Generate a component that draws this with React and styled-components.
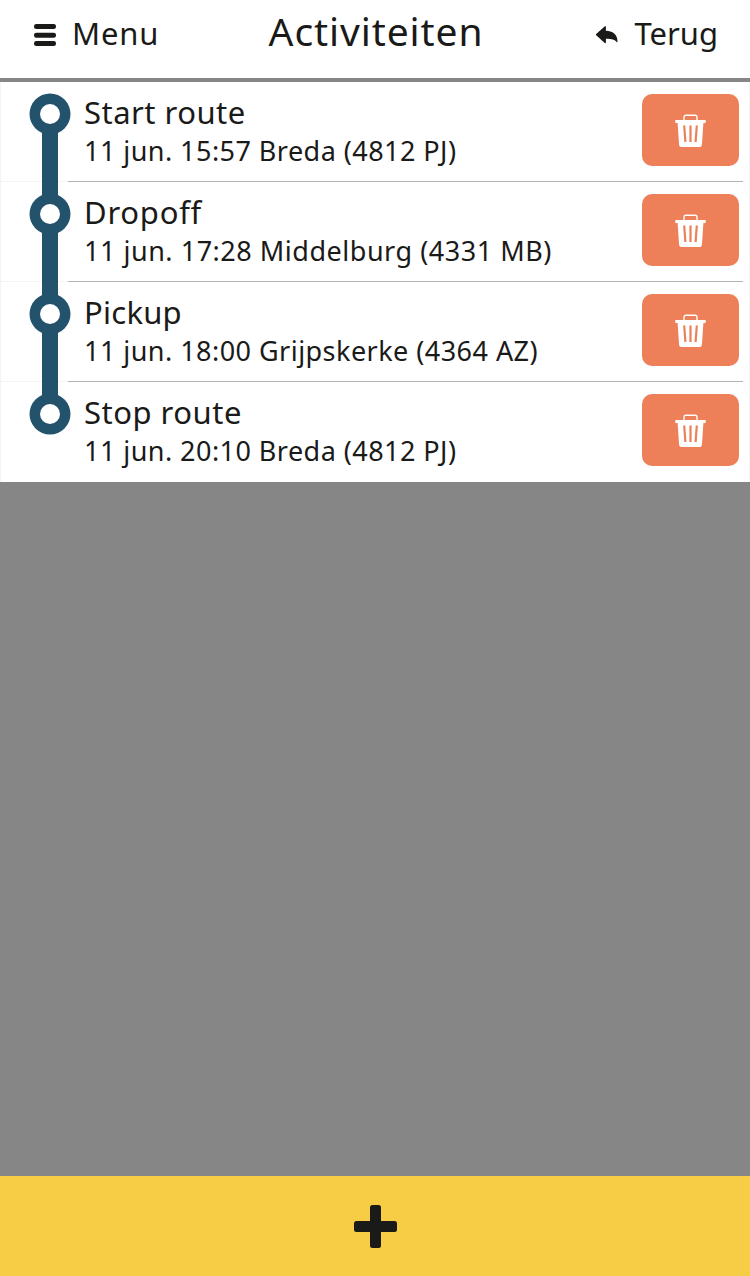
import React from "react";
import styled, { createGlobalStyle } from "styled-components";

const GlobalStyle = createGlobalStyle`
  * { box-sizing: border-box; }
  body { margin: 0; background: #868686; }
  button { border: 0; padding: 0; margin: 0; background: none; font: inherit; color: inherit; }
  svg { display: block; }
`;

const Screen = styled.div`
  display: flex;
  flex-direction: column;
  width: 750px;
  height: 1276px;
  background: #868686;
  color: #1a1a18;
  font-family: "Noto Sans", "Open Sans", sans-serif;
`;

const Header = styled.header`
  display: grid;
  grid-template-columns: 1fr auto 1fr;
  height: 78px;
  padding: 0 32px 0 34px;
  margin-bottom: 4px;
  background: #fff;
`;

const HeaderButton = styled.button`
  display: flex;
  justify-self: ${(p) => p.$side};
  gap: 16px;
  height: 70px;
  align-items: center;
  font-size: 31px;
  line-height: 42px;
  letter-spacing: ${(p) => p.$track}px;
`;

const HeaderLabel = styled.span`
  padding-bottom: 5px;
`;

const Title = styled.h1`
  margin: 4px 0 0;
  font-size: 39px;
  font-weight: 400;
  line-height: 54px;
  letter-spacing: 0.9px;
`;

const List = styled.ul`
  margin: 0;
  padding: 0;
  list-style: none;
  background: #fff;
`;

const Row = styled.li`
  display: flex;
  height: 100px;
  border: solid #f4f4f4;
  border-width: 0 1px;
`;

const Track = styled.div`
  width: 67px;
  padding-left: 28px;
  border-bottom: 1px solid ${(p) => (p.$last ? "transparent" : "#f4f4f4")};
`;

const Details = styled.div`
  display: flex;
  flex: 1;
  justify-content: space-between;
  margin-right: 6px;
  padding: 0 4px 0 16px;
  border-bottom: 1px solid ${(p) => (p.$last ? "transparent" : "#b4b4b4")};
`;

const Texts = styled.div`
  padding-top: 9px;
  white-space: nowrap;
`;

const Name = styled.div`
  font-size: 31px;
  line-height: 42px;
  letter-spacing: ${(p) => p.$track}px;
`;

const Info = styled.div`
  margin-top: 2px;
  font-size: 27px;
  line-height: 32px;
  letter-spacing: ${(p) => p.$track}px;
`;

const DeleteButton = styled.button`
  display: flex;
  justify-content: center;
  width: 97px;
  height: 72px;
  margin-top: 12px;
  padding-top: 20px;
  border-radius: 10px;
  background: #ed7f59;
`;

const AddBar = styled.button`
  display: flex;
  align-items: center;
  justify-content: center;
  height: 100px;
  margin-top: auto;
  background: #f7cd45;
`;

const MenuIcon = () => (
  <svg width="22" height="22" viewBox="0 0 22 22" fill="currentColor">
    <rect x="0" y="0" width="22" height="5" rx="2.3" />
    <rect x="0" y="8.8" width="22" height="5" rx="2.3" />
    <rect x="0" y="17" width="22" height="5" rx="2.3" />
  </svg>
);

const BackIcon = () => (
  <svg width="22" height="18" viewBox="0 0 22 18" fill="currentColor">
    <path d="M.2 8.1 8.600.4q1-.8 1.300.5V4.800C16.500 5 21.500 8.400 21.500 15.600q-.3 1.300-1.100.2C18.200 13.200 15 12.600 9.900 12.800v3.600q-.2 1.300-1.200.5L.2 9.300q-.5-.6 0-1.200Z" />
  </svg>
);

const Node = ({ first, last }) => (
  <svg width="42" height="100" viewBox="0 0 42 100">
    {!first && <rect x="13" y="0" width="16" height="32" fill="#23526d" />}
    {!last && <rect x="13" y="32" width="16" height="68" fill="#23526d" />}
    <circle cx="21" cy="32" r="20.5" fill="#23526d" />
    <circle cx="21" cy="32" r="10" fill="#fff" />
  </svg>
);

const TrashIcon = () => (
  <svg width="31" height="34" viewBox="0 0 31 34">
    <path d="M9 7V3.200Q9 1.200 11 1.200h9Q22 1.200 22 3.200V7" fill="none" stroke="#fff" strokeWidth="1.4" />
    <path d="M.3 6h30.400v3h-2.300L26.900 31q-.2 2-2.200 2H6.300q-2 0-2.200-2L2.600 9H.3Z" fill="#fff" />
    <path d="m9.200 11.500 1.200 16.500M15.500 11.500V28M21.800 11.500 20.600 28" fill="none" stroke="#ed7f59" strokeWidth="2.2" />
  </svg>
);

const PlusIcon = () => (
  <svg width="43" height="43" viewBox="0 0 43 43" fill="currentColor">
    <rect x="16" y="0" width="11" height="43" rx="2.5" />
    <rect x="0" y="16" width="43" height="11" rx="2.5" />
  </svg>
);

const activities = [
  { name: "Start route", info: "11 jun. 15:57 Breda (4812 PJ)", nameTrack: 0.48, infoTrack: 0.45 },
  { name: "Dropoff", info: "11 jun. 17:28 Middelburg (4331 MB)", nameTrack: 0.75, infoTrack: 0.52 },
  { name: "Pickup", info: "11 jun. 18:00 Grijpskerke (4364 AZ)", nameTrack: 0.25, infoTrack: 0.46 },
  { name: "Stop route", info: "11 jun. 20:10 Breda (4812 PJ)", nameTrack: 0.5, infoTrack: 0.45 },
];

export default function App() {
  return (
    <Screen>
      <GlobalStyle />
      <Header>
        <HeaderButton $side="start" $track={0.8}>
          <MenuIcon />
          <HeaderLabel>Menu</HeaderLabel>
        </HeaderButton>
        <Title>Activiteiten</Title>
        <HeaderButton $side="end" $track={0}>
          <BackIcon />
          <HeaderLabel>Terug</HeaderLabel>
        </HeaderButton>
      </Header>
      <List>
        {activities.map((a, i) => {
          const last = i === activities.length - 1;
          return (
            <Row key={a.name}>
              <Track $last={last}>
                <Node first={i === 0} last={last} />
              </Track>
              <Details $last={last}>
                <Texts>
                  <Name $track={a.nameTrack}>{a.name}</Name>
                  <Info $track={a.infoTrack}>{a.info}</Info>
                </Texts>
                <DeleteButton aria-label="Verwijderen">
                  <TrashIcon />
                </DeleteButton>
              </Details>
            </Row>
          );
        })}
      </List>
      <AddBar aria-label="Toevoegen">
        <PlusIcon />
      </AddBar>
    </Screen>
  );
}
